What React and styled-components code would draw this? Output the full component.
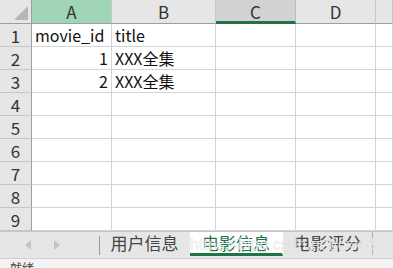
import styled, { createGlobalStyle } from "styled-components";

const GlobalStyle = createGlobalStyle`
  html, body {
    margin: 0;
    padding: 0;
    background: #ffffff;
    overflow: hidden;
  }
  * {
    box-sizing: border-box;
  }
`;

const FONT = `"Noto Sans CJK SC", "Liberation Sans", sans-serif`;

const Window = styled.div`
  width: 393px;
  height: 268px;
  display: flex;
  flex-direction: column;
  overflow: hidden;
  position: relative;
  font-family: ${FONT};
`;

const Grid = styled.div`
  display: grid;
  grid-template-columns: 32px 80px 104px 80px 80px 1fr;
  grid-template-rows: 24px repeat(9, 23px);
  background: #ffffff;
`;

const Corner = styled.div`
  position: relative;
  background: #e6e6e6;
  border-right: 1px solid #9e9e9e;
  border-bottom: 1px solid #9e9e9e;

  &::after {
    content: "";
    position: absolute;
    right: 3px;
    bottom: 3px;
    width: 0;
    height: 0;
    border-left: 14px solid transparent;
    border-bottom: 14px solid #b7b7b7;
  }
`;

const ColHead = styled.div`
  display: flex;
  align-items: center;
  justify-content: center;
  font-size: 17px;
  color: #333;
  background: ${(p) => (p.$selected ? "#a0d5b6" : p.$active ? "#d2d2d2" : "#e6e6e6")};
  border-right: 1px solid ${(p) => (p.$active ? "#bdbdbd" : "#c6c6c6")};
  border-bottom: ${(p) => (p.$active ? "3px solid #217346" : "1px solid #9e9e9e")};
  padding-top: ${(p) => (p.$active ? "2px" : "0")};
`;

const RowHead = styled.div`
  display: flex;
  align-items: center;
  justify-content: center;
  font-size: 17px;
  color: #333;
  background: #e6e6e6;
  border-right: 1px solid #9e9e9e;
  border-bottom: 1px solid #c6c6c6;
`;

const Cell = styled.div`
  display: flex;
  align-items: center;
  justify-content: ${(p) => (p.$num ? "flex-end" : "flex-start")};
  padding: 0 3px 0 3px;
  font-size: 16px;
  color: #111;
  white-space: nowrap;
  border-right: 1px solid #d4d4d4;
  border-bottom: 1px solid #d4d4d4;
`;

const TabBar = styled.div`
  height: 27px;
  display: flex;
  align-items: stretch;
  background: #e6e6e6;
  border-top: 1px solid #c6c6c6;
`;

const Arrows = styled.div`
  width: 99px;
  display: flex;
  align-items: center;
  padding-left: 25px;
  gap: 23px;
`;

const Arrow = styled.span`
  width: 0;
  height: 0;
  border-top: 5px solid transparent;
  border-bottom: 5px solid transparent;
  ${(p) =>
    p.$left
      ? "border-right: 6px solid #c4c4c4;"
      : "border-left: 6px solid #c4c4c4;"}
`;

const Divider = styled.div`
  width: 1px;
  background: #9a9a9a;
  margin: 4px 0 3px;
`;

const Tab = styled.div`
  display: flex;
  align-items: center;
  justify-content: center;
  width: ${(p) => p.$w}px;
  font-size: 17px;
  color: ${(p) => (p.$active ? "#217346" : "#444")};
  background: ${(p) => (p.$active ? "#ffffff" : "transparent")};
  border-bottom: ${(p) => (p.$active ? "3px solid #217346" : "3px solid transparent")};
  border-right: 1px solid ${(p) => (p.$last ? "#b0b0b0" : "transparent")};
  margin-bottom: 2px;
`;

const StatusBar = styled.div`
  flex: 1;
  background: #f3f3f3;
  border-top: 1px solid #d0d0d0;
  padding: 2px 0 0 10px;
  font-size: 12px;
  line-height: 14px;
  color: #444;
  overflow: hidden;
`;

const Watermark = styled.div`
  position: absolute;
  left: 190px;
  top: 236px;
  font-family: "Liberation Sans", sans-serif;
  font-size: 16px;
  color: rgba(255, 255, 255, 0.7);
  text-shadow: 0 0 1px rgba(150, 150, 150, 0.45);
  pointer-events: none;
`;

const cols = ["A", "B", "C", "D", ""];
const data = {
  1: ["movie_id", "title"],
  2: [1, "XXX全集"],
  3: [2, "XXX全集"],
};

const App = () => {
  return (
    <Window>
      <GlobalStyle />
      <Grid>
        <Corner />
        {cols.map((c, i) => (
          <ColHead key={i} $selected={c === "A"} $active={c === "C"}>
            {c}
          </ColHead>
        ))}
        {Array.from({ length: 9 }, (_, r) => {
          const row = r + 1;
          const vals = data[row] || [];
          return [
            <RowHead key={`h${row}`}>{row}</RowHead>,
            ...cols.map((_, ci) => {
              const v = vals[ci];
              return (
                <Cell key={`${row}-${ci}`} $num={typeof v === "number"}>
                  {v}
                </Cell>
              );
            }),
          ];
        })}
      </Grid>
      <TabBar>
        <Arrows>
          <Arrow $left />
          <Arrow />
        </Arrows>
        <Divider />
        <Tab $w={90}>用户信息</Tab>
        <Tab $w={93} $active>
          电影信息
        </Tab>
        <Tab $w={90} $last>
          电影评分
        </Tab>
      </TabBar>
      <StatusBar>就绪</StatusBar>
      <Watermark>https://blog.csdn.net/cxx654</Watermark>
    </Window>
  );
};

export default App;
